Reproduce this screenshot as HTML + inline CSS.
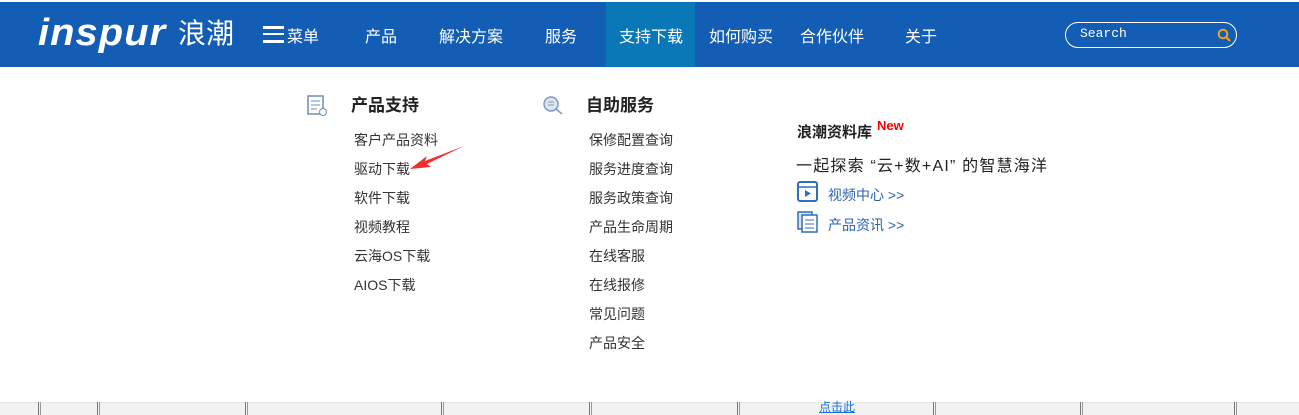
<!DOCTYPE html>
<html><head><meta charset="utf-8"><style>
*{margin:0;padding:0;box-sizing:border-box}
body{width:1299px;height:415px;overflow:hidden;background:#fff;font-family:"Liberation Sans","Noto Sans CJK SC",sans-serif;position:relative}
.hdr{position:absolute;top:2px;left:0;width:1299px;height:65px;background:#135db4}
.t{position:absolute;white-space:nowrap}
.nav{color:#fff;font-size:16px;top:23px}
.act{position:absolute;left:606px;top:2px;width:89px;height:65px;background:#0a77b6}
.h2{font-size:17px;font-weight:bold;color:#222}
.li{font-size:14px;color:#333}
.bot{position:absolute;top:402px;left:0;width:1299px;height:13px;background:#f2f2f2;border-top:1px solid #e8e8e8}
.vl{position:absolute;top:402px;width:3px;height:13px;border-left:1px solid #777;border-right:1px solid #999}
</style></head><body>
<div class="hdr"></div>
<div class="act"></div>
<div class="t" style="left:38px;top:13px;color:#fff;font-size:38px;font-weight:bold;font-style:italic;letter-spacing:1px;line-height:40px;transform:scaleX(1.05);transform-origin:left">inspur</div>
<div class="t" style="left:178px;top:17px;color:#fff;font-size:28px;line-height:34px">浪潮</div>
<div style="position:absolute;left:263px;top:26px;width:21px;height:3px;background:#fff"></div>
<div style="position:absolute;left:263px;top:33px;width:21px;height:2px;background:#fff"></div>
<div style="position:absolute;left:263px;top:40px;width:21px;height:3px;background:#fff"></div>
<div class="t nav" style="left:287px">菜单</div>
<div class="t nav" style="left:365px">产品</div>
<div class="t nav" style="left:439px">解决方案</div>
<div class="t nav" style="left:545px">服务</div>
<div class="t nav" style="left:619px">支持下载</div>
<div class="t nav" style="left:709px">如何购买</div>
<div class="t nav" style="left:800px">合作伙伴</div>
<div class="t nav" style="left:905px">关于</div>
<div style="position:absolute;left:1065px;top:22px;width:172px;height:26px;border:1px solid #fff;border-radius:13px"></div>
<div class="t" style="left:1080px;top:26px;color:#fff;font-size:13px;font-family:'Liberation Mono',monospace">Search</div>
<svg style="position:absolute;left:1217px;top:28px" width="14" height="14"><circle cx="6" cy="6" r="4.3" fill="none" stroke="#f0a020" stroke-width="2"/><line x1="9" y1="9" x2="13" y2="13" stroke="#f0a020" stroke-width="2"/></svg>

<svg style="position:absolute;left:307px;top:95px" width="22" height="22"><rect x="1" y="1" width="15" height="18" fill="none" stroke="#6b8fb8" stroke-width="1.5"/><line x1="4" y1="6" x2="13" y2="6" stroke="#6b8fb8"/><line x1="4" y1="10" x2="13" y2="10" stroke="#6b8fb8"/><line x1="4" y1="14" x2="10" y2="14" stroke="#6b8fb8"/><circle cx="16" cy="17" r="3.5" fill="#fff" stroke="#6b8fb8"/></svg>
<div class="t h2" style="left:351px;top:91px">产品支持</div>
<svg style="position:absolute;left:540px;top:94px" width="26" height="22"><circle cx="11" cy="10" r="7" fill="#dfe6f0" stroke="#7d9cc0" stroke-width="1.5"/><line x1="8" y1="8" x2="14" y2="8" stroke="#7d9cc0"/><line x1="8" y1="11" x2="14" y2="11" stroke="#7d9cc0"/><line x1="16" y1="15" x2="22" y2="20" stroke="#7d9cc0" stroke-width="1.5"/></svg>
<div class="t h2" style="left:586px;top:91px">自助服务</div>
<div class="t li" style="left:354px;top:130px">客户产品资料</div>
<div class="t li" style="left:354px;top:159px">驱动下载</div>
<div class="t li" style="left:354px;top:188px">软件下载</div>
<div class="t li" style="left:354px;top:217px">视频教程</div>
<div class="t li" style="left:354px;top:246px">云海OS下载</div>
<div class="t li" style="left:354px;top:275px">AIOS下载</div>
<svg style="position:absolute;left:405px;top:143px" width="62" height="32"><path d="M59 3 L20 18 L22 13 L5 26 L26 24 L22 21 Z" fill="#f03030"/></svg>
<div class="t li" style="left:589px;top:130px">保修配置查询</div>
<div class="t li" style="left:589px;top:159px">服务进度查询</div>
<div class="t li" style="left:589px;top:188px">服务政策查询</div>
<div class="t li" style="left:589px;top:217px">产品生命周期</div>
<div class="t li" style="left:589px;top:246px">在线客服</div>
<div class="t li" style="left:589px;top:275px">在线报修</div>
<div class="t li" style="left:589px;top:304px">常见问题</div>
<div class="t li" style="left:589px;top:333px">产品安全</div>
<div class="t" style="left:797px;top:121px;font-size:15px;font-weight:bold;color:#222">浪潮资料库</div>
<div class="t" style="left:877px;top:118px;font-size:13px;font-weight:bold;color:#f00">New</div>
<div class="t" style="left:796px;top:152px;font-size:16px;color:#222;letter-spacing:1.2px">一起探索 “云+数+AI” 的智慧海洋</div>
<svg style="position:absolute;left:797px;top:181px" width="22" height="22"><rect x="1" y="1" width="19" height="19" rx="2" fill="none" stroke="#2e6fbf" stroke-width="2"/><line x1="1" y1="6" x2="20" y2="6" stroke="#2e6fbf" stroke-width="1.5"/><path d="M8 9 L14 12.5 L8 16 Z" fill="#2e6fbf"/></svg>
<div class="t" style="left:828px;top:185px;font-size:14px;color:#2a64b3">视频中心 &gt;&gt;</div>
<svg style="position:absolute;left:797px;top:211px" width="22" height="22"><rect x="1" y="1" width="14" height="17" fill="#dbe6f3" stroke="#2e6fbf" stroke-width="1.5"/><rect x="5" y="4" width="15" height="17" fill="#fff" stroke="#2e6fbf" stroke-width="1.5"/><line x1="8" y1="9" x2="17" y2="9" stroke="#2e6fbf"/><line x1="8" y1="13" x2="17" y2="13" stroke="#2e6fbf"/><line x1="8" y1="17" x2="17" y2="17" stroke="#2e6fbf"/></svg>
<div class="t" style="left:828px;top:215px;font-size:14px;color:#2a64b3">产品资讯 &gt;&gt;</div>

<div class="bot"></div>
<div class="vl" style="left:38px"></div><div class="vl" style="left:97px"></div><div class="vl" style="left:245px"></div><div class="vl" style="left:441px"></div><div class="vl" style="left:589px"></div><div class="vl" style="left:737px"></div><div class="vl" style="left:933px"></div><div class="vl" style="left:1080px"></div><div class="vl" style="left:1234px"></div>
<div class="t" style="left:819px;top:400px;font-size:12px;color:#1a6fe0;text-decoration:underline;line-height:14px">点击此</div>
</body></html>
